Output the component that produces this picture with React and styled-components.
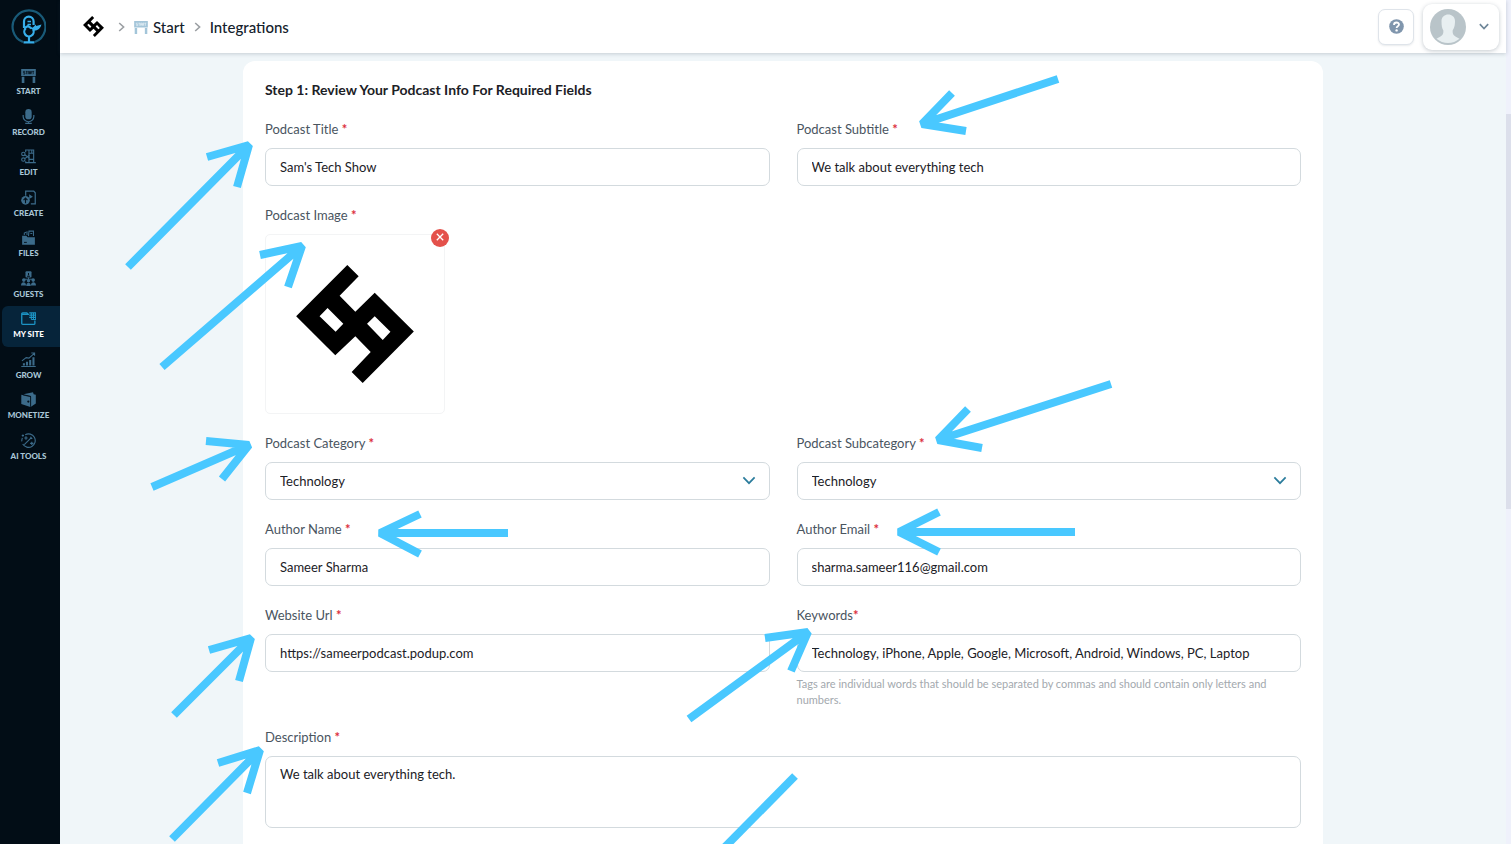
import { useId } from "react";
import styled, { createGlobalStyle } from "styled-components";

const GlobalStyle = createGlobalStyle`
  *, *::before, *::after {
    box-sizing: border-box;
  }

  body {
    margin: 0;
    background: #f0f6f9;
    font-family: Lato, "Open Sans", sans-serif;
    font-size: 13px;
    line-height: 20px;
    color: #1c2126;
  }

  button, input, select, textarea {
    font: inherit;
    color: inherit;
  }
`;

/* ---------- drawings ---------- */

const BrandMark = ({ size }) => (
  <svg width={size} height={size} viewBox="109 132 352 353" aria-hidden="true">
    <path
      fillRule="evenodd"
      d="M262 132 296 166 239 224 286 272 344 215 461 331 308 485 275 452 332 392 286 345 226 402 109 285ZM203 261 179 285 227 332 250 308ZM344 285 321 308 368 356 391 332Z"
    />
  </svg>
);

const AppLogo = () => (
  <svg width="36" height="36" viewBox="0 0 36 36" fill="none" aria-hidden="true">
    <path d="M13 33A16.400 16.400 0 1 1 25 33" stroke="#195a78" strokeWidth="2.200" />
    <g stroke="#37aeea" strokeWidth="2.200">
      <path d="M14 19v-6.500a4.800 4.800 0 0 1 9.600 0V16" />
      <path d="M17.500 12.500H21M17.500 15.500H21" strokeWidth="1.400" />
      <path d="M15.800 19.200a4.700 4.700 0 1 0 7.400 1.400" />
      <path d="M14 19.300 18 17l3.500 2.400" />
      <path d="M19 27v6M13.500 33.300h11" />
    </g>
    <path d="M20.500 19.200c2.500-.4 3.500-1.200 5-3.600l.8 1.300 5.200-1.400c-.9 3.800-3.500 6-7.500 6.300z" fill="#37aeea" />
  </svg>
);

const Chevron = ({ width, height, stroke }) => (
  <svg width={width} height={height} viewBox="0 0 12 8" fill="none" stroke="currentColor" strokeWidth={stroke} aria-hidden="true">
    <path d="M1 1.2 6 6.4 11 1.2" />
  </svg>
);

const CrumbArrow = () => (
  <svg width="7" height="10" viewBox="0 0 7 10" fill="none" stroke="#9b9fa3" strokeWidth="1.6" aria-hidden="true">
    <path d="M1.2 1 5.6 5 1.2 9" />
  </svg>
);

const StartGlyph = ({ cut }) => (
  <>
    <path d="M.2 1h15.600v7.500H.2zM.8 9.200h2.800V16H.8zM12.400 9.200h2.800V16h-2.800z" fill="currentColor" />
    <path d="M4.2 3.6H2.6V5h1.6v1.5H2.4M5 3.6h2M6 3.6v3M7.6 6.6v-3h1.5v3M7.6 5.3h1.5M10 6.6v-3h1.4V5H10l1.4 1.6M12 3.6h2M13 3.6v3" fill="none" stroke={cut} strokeWidth=".8" />
  </>
);

const glyphs = {
  start: <StartGlyph cut="#03101b" />,
  record: (
    <>
      <rect x="4.600" y="0" width="6.800" height="11" rx="3.400" fill="currentColor" />
      <path d="M2.300 6.500v1.400a5.700 5.700 0 0 0 11.400 0V6.500M8 13.400v2M4.500 15.400h7" fill="none" stroke="currentColor" strokeWidth="1.300" />
    </>
  ),
  edit: (
    <g fill="none" stroke="currentColor" strokeWidth="1.2">
      <path d="M5 3.500V1h8.500v13.500H5V13M8.500 1v13.500M13.500 4.500h-5M13.500 11h-5M11.500 1v3M13.500 14.500h2.300" />
      <circle cx="2.5" cy="5.2" r="1.8" />
      <circle cx="2.5" cy="11.3" r="1.8" />
      <path d="m4 6.2 5 3.600M4 10.3l5-3.600" />
    </g>
  ),
  create: (
    <>
      <path d="M5 6V1.300h8.600l1.600 1.600v11.800h-4.700" fill="none" stroke="currentColor" strokeWidth="1.3" />
      <circle cx="4.8" cy="11" r="4.6" fill="currentColor" />
      <path d="M8.7 4.600v5l4-2.500z" fill="currentColor" />
      <path d="M4.8 14V8.8M2.7 10.7l2.1-2.1 2.1 2.1" fill="none" stroke="#03101b" strokeWidth="1.2" />
    </>
  ),
  files: (
    <>
      <path d="M1.200 6.200h4.500l1.400 1.500h7.700v8H1.200z" fill="currentColor" />
      <path d="M3.500 5.300V3.200l2-.8M8 6.500l.5-5.300h4.800v5.300M10 3.800h2M6.400 1.200v4" fill="none" stroke="currentColor" strokeWidth="1.1" />
      <path d="M3.2 13.2h3" stroke="#03101b" strokeWidth="1" />
    </>
  ),
  guests: (
    <>
      <rect x="4.8" y=".3" width="6.4" height="6.5" rx="1" fill="currentColor" />
      <path d="M8 2.2v2.4M6.5 5.5h3" stroke="#03101b" strokeWidth="1.1" />
      <path d="M8 7v3M3.5 8.800h9" stroke="currentColor" strokeWidth="1" />
      <circle cx="3" cy="9.700" r="1.9" fill="currentColor" />
      <circle cx="8" cy="10.500" r="1.8" fill="currentColor" />
      <circle cx="13" cy="9.700" r="1.9" fill="currentColor" />
      <path d="M0 15.500c0-4.500 5.400-4.500 5.400 0zM5.600 16c0-4.500 4.800-4.500 4.800 0zM10.600 15.500c0-4.500 5.400-4.500 5.400 0z" fill="currentColor" />
    </>
  ),
  site: (
    <g fill="none" stroke="#1c93c4" strokeWidth="1.4">
      <path d="M8.500 3.500H.800M14.800 10v3.200a1 1 0 0 1-1 1H1.800a1 1 0 0 1-1-1V3a1 1 0 0 1 1-1h4.400l1.400 1.500" />
      <path d="M8.800 2h6.800v7H11M11 2v7M13.300 2v7M8.800 4.400h6.800M8.800 6.800h6.800" strokeWidth="1.1" />
    </g>
  ),
  grow: (
    <>
      <path d="M2 12h2.200v2.500H2zM5.300 10.500h2.200v4H5.300zM8.700 8.500h2.200v6H8.700zM12.200 5.500h2.200v9h-2.200zM.3 14.800h15.400V16H.3z" fill="currentColor" />
      <path d="M1 9.500 5.500 6l3 .5 5.700-5M11 1h3.500v3" fill="none" stroke="currentColor" strokeWidth="1.1" />
    </>
  ),
  monetize: (
    <>
      <path d="M.3 2.900 10 5v11L.3 12.700z" fill="currentColor" />
      <path d="M2.500 2.300 12.800.300l.7 2.100 2.300.5v9.300l-5.200 3.500V4.200z" fill="currentColor" />
      <path d="m2.300 3.200 8 1.800v10.500" fill="none" stroke="#03101b" strokeWidth=".7" />
      <circle cx="7.8" cy="10.200" r="1.200" fill="#03101b" />
    </>
  ),
  ai: (
    <g fill="none" stroke="currentColor" strokeWidth="1.2">
      <path d="M4.500 1.800A7.200 7.200 0 1 1 1.800 11.800M.9 9a7.200 7.200 0 0 1 .6-3.800" />
      <path d="m3.500 12.500 7.500-7.500M10 4.2l2 2M5.300 3.5v3.600M3.500 5.300h3.600M11.5 9.2v3.6M9.7 11h3.6M2 1.500v2.400M.8 2.700h2.400" />
    </g>
  ),
};

const RailIcon = ({ name }) => (
  <svg width="15" height="15" viewBox="0 0 16 16" aria-hidden="true">
    {glyphs[name]}
  </svg>
);

const HelpIcon = () => (
  <svg width="15" height="15" viewBox="0 0 15 15" aria-hidden="true">
    <circle cx="7.5" cy="7.5" r="7.3" fill="#8096ad" />
    <path d="M5 5.900c0-3.300 5-3 5-.3 0 1.800-2.400 1.600-2.400 3.400" fill="none" stroke="#fff" strokeWidth="1.8" />
    <circle cx="7.6" cy="11.4" r="1.2" fill="#fff" />
  </svg>
);

const AvatarPicture = () => (
  <svg width="36" height="36" viewBox="0 0 36 36" role="img" aria-label="Profile picture">
    <circle cx="18" cy="18" r="18" fill="#b9c4c9" />
    <path
      d="M11.500 12c0-8.800 13.500-8.800 13.500 0 0 5-1 7.400-2.300 9.300-.4 4.800 1.300 5.500 6.800 8.500A17.900 17.900 0 0 1 6.500 29.800c5.500-3 7.200-3.700 6.800-8.500-1.300-1.900-1.800-4.300-1.800-9.300z"
      fill="#e8eff1"
    />
  </svg>
);

const CrossIcon = () => (
  <svg width="8" height="8" viewBox="0 0 8 8" stroke="#fff" strokeWidth="1.3" aria-hidden="true">
    <path d="m.8.8 6.400 6.400M7.200.8.8 7.200" />
  </svg>
);

// tail, tip, then the two ends of the head
const arrows = [
  [[128, 267], [249, 145], [207, 157], [237, 187]],
  [[162, 367], [302, 246], [260, 255], [288, 287]],
  [[1058, 79], [922, 124], [952, 93], [966, 131]],
  [[1111, 384], [938, 440], [968, 409], [982, 448]],
  [[152, 487], [249, 445], [206, 441], [222, 479]],
  [[508, 533], [380, 533], [420, 514], [420, 554]],
  [[1075, 532], [899, 532], [939, 512], [939, 552]],
  [[174, 715], [251, 638], [209, 650], [239, 681]],
  [[689, 719], [808, 632], [765, 638], [791, 671]],
  [[172, 839], [260, 750], [218, 763], [247, 793]],
];

const Annotations = () => (
  <Overlay width="1511" height="844" viewBox="0 0 1511 844" aria-hidden="true">
    {arrows.map(([tail, tip, a, b]) => (
      <path key={tail.join()} d={`M${tail} L${tip} M${a} L${tip} L${b}`} />
    ))}
    <path d="M795 776 720 852" />
  </Overlay>
);

/* ---------- page ---------- */

const railItems = [
  { icon: "start", label: "START" },
  { icon: "record", label: "RECORD" },
  { icon: "edit", label: "EDIT" },
  { icon: "create", label: "CREATE" },
  { icon: "files", label: "FILES" },
  { icon: "guests", label: "GUESTS" },
  { icon: "site", label: "MY SITE", active: true },
  { icon: "grow", label: "GROW" },
  { icon: "monetize", label: "MONETIZE" },
  { icon: "ai", label: "AI TOOLS" },
];

const Rail = () => (
  <Sidebar>
    <AppLogo />
    <RailNav aria-label="Main">
      {railItems.map(({ icon, label, active }) => (
        <RailLink key={label} href="#" $active={active}>
          <RailIcon name={icon} />
          {label}
        </RailLink>
      ))}
    </RailNav>
  </Sidebar>
);

const TopBar = () => (
  <Header>
    <Crumbs aria-label="Breadcrumb">
      <BrandMark size={21} />
      <CrumbArrow />
      <Crumb href="#">
        <CrumbIcon width="14" height="14" viewBox="0 0 16 16" aria-hidden="true">
          <StartGlyph cut="#e6f1f7" />
        </CrumbIcon>
        Start
      </Crumb>
      <CrumbArrow />
      <Crumb href="#">Integrations</Crumb>
    </Crumbs>
    <HelpButton type="button" aria-label="Help">
      <HelpIcon />
    </HelpButton>
    <ProfileButton type="button" aria-label="Account">
      <AvatarPicture />
      <Chevron width={10} height={7} stroke={2} />
    </ProfileButton>
  </Header>
);

const Field = ({ label, tight, value, hint }) => {
  const id = useId();
  return (
    <FieldBox>
      <Label htmlFor={id}>
        {label}
        {tight ? "" : " "}
        <Star>*</Star>
      </Label>
      <Input id={id} defaultValue={value} />
      {hint && <Hint>{hint}</Hint>}
    </FieldBox>
  );
};

const SelectField = ({ label, value }) => {
  const id = useId();
  return (
    <FieldBox>
      <Label htmlFor={id}>
        {label} <Star>*</Star>
      </Label>
      <SelectWrap>
        <Select id={id} defaultValue={value}>
          <option>{value}</option>
        </Select>
        <Chevron width={14} height={9} stroke={1.5} />
      </SelectWrap>
    </FieldBox>
  );
};

const App = () => (
  <>
    <GlobalStyle />
    <Shell>
      <Rail />
      <Page>
        <TopBar />
        <Content>
          <Card>
            <Title>Step 1: Review Your Podcast Info For Required Fields</Title>
            <Form>
              <Field label="Podcast Title" value="Sam's Tech Show" />
              <Field label="Podcast Subtitle" value="We talk about everything tech" />
              <FieldBox $wide>
                <Label as="span">
                  Podcast Image <Star>*</Star>
                </Label>
                <ImageBox>
                  <BrandMark size={118} />
                  <RemoveButton type="button" aria-label="Remove image">
                    <CrossIcon />
                  </RemoveButton>
                </ImageBox>
              </FieldBox>
              <SelectField label="Podcast Category" value="Technology" />
              <SelectField label="Podcast Subcategory" value="Technology" />
              <Field label="Author Name" value="Sameer Sharma" />
              <Field label="Author Email" value="sharma.sameer116@gmail.com" />
              <Field label="Website Url" value="https://sameerpodcast.podup.com" />
              <Field
                label="Keywords"
                tight
                value="Technology, iPhone, Apple, Google, Microsoft, Android, Windows, PC, Laptop"
                hint="Tags are individual words that should be separated by commas and should contain only letters and numbers."
              />
              <FieldBox $wide>
                <Label htmlFor="description">
                  Description <Star>*</Star>
                </Label>
                <TextArea id="description" defaultValue="We talk about everything tech." />
              </FieldBox>
            </Form>
          </Card>
        </Content>
      </Page>
      <ScrollTrack>
        <ScrollThumb />
      </ScrollTrack>
      <Annotations />
    </Shell>
  </>
);

export default App;

const Shell = styled.div`
  position: relative;
  display: grid;
  grid-template-columns: 60px minmax(0, 1fr) 5px;
  height: 100vh;
  overflow: hidden;
`;

const Sidebar = styled.aside`
  display: flex;
  flex-direction: column;
  gap: 18px;
  padding-top: 9px;
  background: #020d16;

  > svg {
    margin-left: 10px;
  }
`;

const RailNav = styled.nav`
  display: flex;
  flex-direction: column;
  height: 405px;
  margin-left: 2px;
`;

const RailLink = styled.a`
  display: flex;
  flex: 1;
  flex-direction: column;
  align-items: center;
  gap: 3px;
  padding: 5px 5px 0 0;
  border-radius: 6px 0 0 6px;
  background: ${({ $active }) => ($active ? "#06243a" : "transparent")};
  color: ${({ $active }) => ($active ? "#ffffff" : "#a9c6d6")};
  font-size: 8px;
  font-weight: 900;
  line-height: 10px;
  white-space: nowrap;
  text-decoration: none;

  svg {
    color: #3c6b8a;
  }
`;

const Page = styled.div`
  display: flex;
  flex-direction: column;
  min-width: 0;
  min-height: 0;
`;

const Header = styled.header`
  z-index: 1;
  display: flex;
  flex-shrink: 0;
  align-items: center;
  gap: 9px;
  height: 53px;
  padding: 0 7px 0 23px;
  background: #ffffff;
  box-shadow: 0 1px 4px rgba(40, 60, 80, 0.22);
`;

const Crumbs = styled.nav`
  display: flex;
  flex: 1;
  align-items: center;
  gap: 9px;

  > svg:first-child {
    margin-right: 5px;
  }
`;

const Crumb = styled.a`
  display: flex;
  align-items: center;
  gap: 5px;
  color: #14212c;
  font-size: 15px;
  font-weight: 500;
  text-decoration: none;
`;

const CrumbIcon = styled.svg`
  color: #a3c5d9;
`;

const HelpButton = styled.button`
  display: grid;
  place-items: center;
  width: 36px;
  height: 36px;
  padding: 0;
  border: 1px solid #dfe4ea;
  border-radius: 7px;
  background: #ffffff;
  box-shadow: 0 1px 2px rgba(40, 60, 80, 0.1);
`;

const ProfileButton = styled.button`
  display: flex;
  align-items: center;
  gap: 13px;
  height: 46px;
  padding: 0 10px 0 7px;
  border: 0;
  border-radius: 9px;
  background: #ffffff;
  box-shadow: 0 1px 4px rgba(40, 60, 80, 0.28);
  color: #6f8799;
`;

const Content = styled.main`
  display: flex;
  flex: 1;
  justify-content: center;
  min-height: 0;
  padding-top: 8px;
`;

const Card = styled.section`
  width: 100%;
  max-width: 1080px;
  height: max-content;
  padding: 19px 22px 40px;
  border-radius: 12px;
  background: #ffffff;
`;

const Title = styled.h1`
  margin: 0 0 19px;
  font-size: 14px;
  font-weight: 700;
  line-height: 20px;
`;

const Form = styled.form`
  display: grid;
  grid-template-columns: repeat(2, minmax(0, 1fr));
  gap: 19px 27px;
`;

const FieldBox = styled.div`
  display: flex;
  flex-direction: column;
  grid-column: ${({ $wide }) => ($wide ? "1 / -1" : "auto")};
`;

const Label = styled.label`
  margin-bottom: 9px;
  color: #4a555f;
  font-size: 13px;
  line-height: 20px;
`;

const Star = styled.span`
  color: #dc2f3c;
  font-weight: 700;
`;

const Input = styled.input`
  width: 100%;
  height: 38px;
  padding: 0 14px;
  border: 1px solid #d3dade;
  border-radius: 7px;
  background: #ffffff;
`;

const Hint = styled.small`
  margin-top: 4px;
  color: #a3a9ae;
  font-size: 11px;
  line-height: 16px;
`;

const SelectWrap = styled.div`
  display: grid;
  align-items: center;
  color: #2b7c9c;

  > * {
    grid-area: 1 / 1;
  }

  > svg {
    justify-self: end;
    margin: 0 14px 2px 0;
    pointer-events: none;
  }
`;

const Select = styled(Input).attrs({ as: "select" })`
  appearance: none;
  color: #1c2126;
`;

const ImageBox = styled.div`
  position: relative;
  display: grid;
  place-items: center;
  width: 180px;
  height: 180px;
  border: 1px solid #f3f4f5;
  border-radius: 5px;
`;

const RemoveButton = styled.button`
  position: absolute;
  top: -6px;
  right: -5px;
  display: grid;
  place-items: center;
  width: 18px;
  height: 18px;
  padding: 0 0 2px;
  border: 0;
  border-radius: 50%;
  background: #e4514b;
`;

const TextArea = styled.textarea`
  width: 100%;
  height: 72px;
  padding: 7px 14px;
  border: 1px solid #d3dade;
  border-radius: 7px;
  background: #ffffff;
  resize: none;
`;

const ScrollTrack = styled.div`
  padding-top: 114px;
  background: #eff1fb;
`;

const ScrollThumb = styled.div`
  height: 395px;
  background: #dcdfeb;
`;

const Overlay = styled.svg`
  position: absolute;
  top: 0;
  left: 0;
  z-index: 2;
  fill: none;
  stroke: #49c8ff;
  stroke-width: 8px;
  stroke-linejoin: bevel;
  pointer-events: none;
`;
